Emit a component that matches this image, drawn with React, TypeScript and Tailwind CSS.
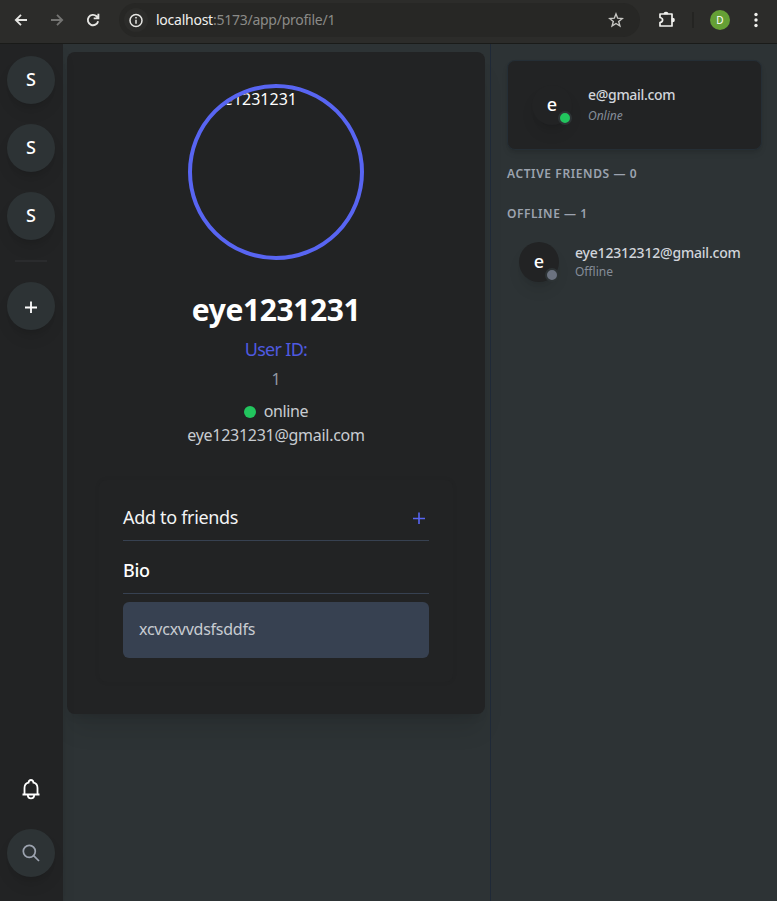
import type { ReactNode } from "react";

function Round({ children }: { children: ReactNode }) {
  return (
    <div className="flex size-12 shrink-0 items-center justify-center rounded-full bg-[#2d3335] text-white shadow-lg">
      {children}
    </div>
  );
}

function BrowserBar() {
  return (
    <header className="flex h-[44px] shrink-0 items-start border-b border-[#1a1b19] bg-[#2c2c2a] pt-[3px]">
      <div className="flex h-[34px] w-[119px] shrink-0 items-center pl-[13px] text-[#e6e6e3]">
        <svg className="size-4" viewBox="0 0 16 16" fill="none" stroke="currentColor" strokeWidth="1.8">
          <path d="M14 8H3M8 2.8L2.8 8L8 13.2" />
        </svg>
        <svg className="ml-5 size-4 text-[#747472]" viewBox="0 0 16 16" fill="none" stroke="currentColor" strokeWidth="1.8">
          <path d="M2 8h11M8 2.8L13.2 8L8 13.2" />
        </svg>
        <svg className="ml-5 size-4" viewBox="0 0 16 16" fill="none" stroke="currentColor" strokeWidth="1.9">
          <path d="M13.1 9.2A5.2 5.2 0 1 1 11.6 4.3L13.4 6M13.4 1.8v4.6H8.7" />
        </svg>
      </div>
      <div className="flex h-[34px] w-[521px] shrink-0 items-center rounded-full bg-[#272725] pl-[5px]">
        <div className="flex size-6 items-center justify-center rounded-full bg-[#2c2c2a]">
          <svg className="size-[15px] text-[#e6e6e3]" viewBox="0 0 15 15" fill="none" stroke="currentColor" strokeWidth="1.5">
            <circle cx="7" cy="7.5" r="6" />
            <path d="M7 6.7v4M7 4v1.5" />
          </svg>
        </div>
        <span className="ml-2 w-[440px] text-[14px] leading-5 tracking-[-0.25px] text-[#8b8b88]">
          <span className="text-[#f0f0ed]">localhost</span>:5173/app/profile/1
        </span>
        <svg className="ml-[12px] size-4 text-[#c7c7c4]" viewBox="0 0 16 16" fill="none" stroke="currentColor" strokeWidth="1.4">
          <path d="M8 1.9l1.7 4.3 4.6.3-3.6 3 1.2 4.5L8 11.5l-3.9 2.5 1.2-4.5-3.6-3 4.6-.3z" />
        </svg>
      </div>
      <div className="flex h-[34px] flex-1 items-center pl-[18px]">
        <svg className="size-[18px] text-[#f0f0ed]" viewBox="0 0 18 18" fill="none" stroke="currentColor" strokeWidth="1.7" strokeLinejoin="round">
          <path d="M2 3h12v12H2v-3.5q2.6-.5 2.6-2.5T2 6.5z" />
          <path d="M6.5 2.4a1.6 1.4 0 0 1 3 0zM14.6 7.5a1.4 1.5 0 0 1 0 3z" fill="currentColor" />
        </svg>
        <div className="ml-[16px] h-4 w-[2px] bg-[#242422]" />
        <div className="ml-4 flex size-5 items-center justify-center rounded-full bg-[#65a035] text-[10px] text-white">D</div>
        <svg className="ml-6 h-4 w-1 text-[#f0f0ed]" viewBox="0 0 4 16" fill="currentColor">
          <circle cx="2" cy="2.5" r="1.7" /><circle cx="2" cy="8" r="1.7" /><circle cx="2" cy="13.5" r="1.7" />
        </svg>
      </div>
    </header>
  );
}

function Sidebar() {
  return (
    <nav className="z-10 flex w-[63px] shrink-0 flex-col items-center bg-[#222324] pt-3 pr-px pb-6 shadow-lg">
      <div className="flex flex-col gap-5 text-[18px] font-medium">
        <Round><span className="-mt-px">S</span></Round>
        <Round><span className="-mt-px">S</span></Round>
        <Round><span className="-mt-px">S</span></Round>
      </div>
      <div className="mt-5 mb-5 h-[2px] w-8 bg-[#2a2b2d]" />
      <Round>
        <svg className="mt-px size-3" viewBox="0 0 12 12" stroke="currentColor" strokeWidth="1.8"><path d="M0 6.5h12M6 .5v12" /></svg>
      </Round>
      <svg className="mt-auto mb-7 h-6 w-6 text-white" viewBox="0 0 24 24" fill="none" stroke="currentColor" strokeWidth="1.8">
        <path d="M3.5 17.5h17M5.500 17.500v-6.500c0-3 1.400-4.700 4-5.300Q9.800 3 12 3t2.500 2.700c2.600.6 4 2.300 4 5.300v6.500M8.800 17.700c0 2.600 1.500 3.600 3.200 3.600s3.200-1 3.200-3.600" />
      </svg>
      <Round>
        <svg className="size-[18px] text-[#9ca3af]" viewBox="0 0 18 18" fill="none" stroke="currentColor" strokeWidth="1.7">
          <circle cx="7.3" cy="7.3" r="6" /><path d="M11.6 11.6l5.4 5.4" />
        </svg>
      </Round>
    </nav>
  );
}

function Profile() {
  return (
    <main className="w-[427px] shrink-0 pt-2 pl-1">
      <section className="flex h-[662px] w-[418px] flex-col items-center rounded-lg bg-[#222324] px-8 pt-8 shadow-xl">
        <div className="size-44 shrink-0 overflow-hidden rounded-full border-4 border-[#5865f2] text-white">
          <span className="-mt-px ml-[15px] block text-[16px] leading-6">eye1231231</span>
        </div>
        <h1 className="mt-8 text-[30px] leading-9 font-bold tracking-[-0.4px] whitespace-nowrap text-white">eye1231231</h1>
        <p className="mt-[7px] text-[18px] leading-7 tracking-[-0.7px] text-[#4f5ae0]">User ID:</p>
        <p className="mt-1 text-[16px] leading-6 text-[#9298a2]">1</p>
        <p className="mt-2 flex items-center text-[16px] leading-6 tracking-[-0.4px] text-[#c8ccd1]">
          <span className="mt-px mr-2 size-3 rounded-full bg-[#22c55e]" />online
        </p>
        <p className="text-[16px] leading-6 tracking-[-0.28px] text-[#c8ccd1]">eye1231231@gmail.com</p>
        <div className="mt-[33px] w-[354px] rounded-lg px-6 pt-4 pb-6 shadow-[0_0_4px_#1b1c1d1a]">
          <div className="flex h-[45px] items-center justify-between border-b border-[#374151] pr-1 text-[18px] leading-7 tracking-[-0.32px] text-[#f3f4f5]">
            <span className="-mt-[2px]">Add to friends</span>
            <svg className="size-3 text-[#5865f2]" viewBox="0 0 12 12" stroke="currentColor" strokeWidth="1.6"><path d="M0 6.5h12M6 .5v12" /></svg>
          </div>
          <h2 className="mt-3 flex h-[41px] items-start border-b border-[#374151] pt-[3px] text-[18px] leading-7 font-medium tracking-[-0.3px] text-white">Bio</h2>
          <div className="mt-2 h-14 rounded-md bg-[#374151] px-4 py-[15px] text-[16px] leading-6 tracking-[-0.25px] text-[#c8ccd1]">xcvcxvvdsfsddfs</div>
        </div>
      </section>
    </main>
  );
}

function Avatar({ dot }: { dot: string }) {
  return (
    <div className="relative flex size-10 shrink-0 items-center justify-center rounded-full bg-[#222324] text-[18px] font-medium text-white shadow-lg">
      <span className="-mt-px">e</span>
      <span className={`absolute right-0 bottom-0 size-3.5 rounded-full border-2 border-[#2d3335] ${dot}`} />
    </div>
  );
}

function Friends() {
  return (
    <aside className="flex-1 border-l border-[#1f2937] pt-4 pr-[15px] pl-4">
      <div className="flex h-[90px] items-center rounded-lg border border-[#252e35] bg-[#222324] pl-6 shadow-md">
        <Avatar dot="bg-[#22c55e]" />
        <div className="ml-4">
          <p className="mt-px text-[14px] leading-5 font-medium tracking-[-0.3px] text-[#d1d5db]">e@gmail.com</p>
          <p className="mt-px text-[12px] leading-5 text-[#858d98] italic">Online</p>
        </div>
      </div>
      <h3 className="mt-4 text-[12px] leading-4 font-semibold tracking-[0.6px] text-[#9ca3af]">ACTIVE FRIENDS — 0</h3>
      <h3 className="mt-6 text-[12px] leading-4 font-semibold tracking-[0.55px] text-[#9ca3af]">OFFLINE — 1</h3>
      <div className="mt-5 flex items-center pl-3">
        <Avatar dot="bg-[#6b7280]" />
        <div className="ml-4">
          <p className="text-[14px] leading-5 font-medium tracking-[-0.2px] whitespace-nowrap text-[#d1d5db]">eye12312312@gmail.com</p>
          <p className="text-[12px] leading-[18px] text-[#858d98]">Offline</p>
        </div>
      </div>
    </aside>
  );
}

export default function App() {
  return (
    <div className="flex h-[901px] w-[777px] flex-col overflow-hidden bg-[#2d3335] font-['Noto_Sans','Open_Sans',sans-serif]">
      <BrowserBar />
      <div className="flex min-h-0 flex-1">
        <Sidebar />
        <Profile />
        <Friends />
      </div>
    </div>
  );
}
